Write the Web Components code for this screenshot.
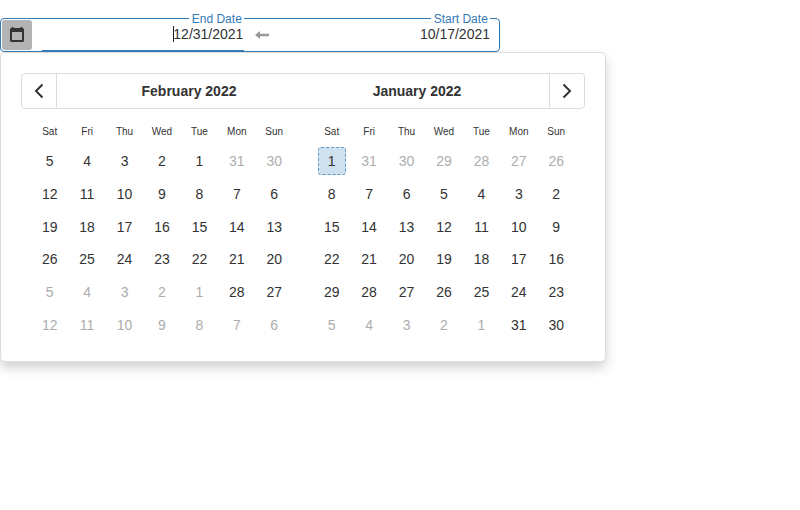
<!DOCTYPE html>
<html lang="en">
<head>
<meta charset="utf-8">
<title>Date range picker</title>
<style>
body { margin: 0; min-height: 510px; background: #fff; color: #333; font: 14px/20px "Liberation Sans", Arial, sans-serif; }
</style>
</head>
<body>
<range-picker></range-picker>
<script>
const define = (name, html, setup) => {
  const t = document.createElement('template');
  t.innerHTML = html;
  customElements.define(name, class extends HTMLElement {
    constructor() {
      super();
      this.attachShadow({ mode: 'open' }).append(t.content.cloneNode(true));
    }
    connectedCallback() { if (setup) setup(this, this.shadowRoot); }
  });
};

define('date-input', `
<style>
:host { display: block; box-sizing: border-box; height: 34px; position: relative; text-align: right; padding-top: 6px; }
:host([active]) { border-bottom: 2px solid #337ab7; padding-right: 0.6px; }
.label { position: absolute; top: -8px; right: 0; background: #fff; color: #337ab7; font-size: 12px; line-height: 18px; padding: 0 2.2px 0 2.4px; }
.value { display: inline-block; position: relative; }
.caret { display: none; position: absolute; left: 0; top: 2px; width: 1px; height: 16px; background: #222; }
:host([active]) .caret { display: block; }
</style>
<span class="label"><slot name="label"></slot></span><span class="value"><span class="caret"></span><slot></slot></span>`);

define('range-field', `
<style>
:host { display: flex; box-sizing: border-box; width: 500px; height: 34px; position: relative; }
.frame { position: absolute; inset: 0; border: 1px solid #337ab7; border-radius: 4px; }
button { all: unset; display: flex; align-items: center; justify-content: center; width: 30px; height: 30px; margin: 2px 10px 2px 2px; border-radius: 3px; background: #b3b3b3; position: relative; }
.arrow { width: 36px; display: flex; justify-content: center; padding-top: 11px; }
.arrow svg { width: 14px; height: 12px; }
.end { width: 202px; }
.start { width: 210px; }
</style>
<div class="frame"></div>
<button aria-label="Open calendar"><svg width="14" height="16" viewBox="0 0 14 16"><path fill="#333" fill-rule="evenodd" d="M1.5 1H1.7V0h1.8v1h7V0h1.8v1h.2A1.5 1.5 0 0 1 14 2.5v11a1.5 1.5 0 0 1-1.5 1.5h-11A1.5 1.5 0 0 1 0 13.500V2.5A1.5 1.5 0 0 1 1.500 1ZM2 5v8h10V5Z"/></svg></button>
<date-input class="end" active><span slot="label">End Date</span>12/31/2021</date-input>
<span class="arrow"><svg viewBox="0 0 14 12"><path fill="#999" d="M0 6 5 2v2.700h9v2.600H5V10Z"/></svg></span>
<date-input class="start"><span slot="label">Start Date</span>10/17/2021</date-input>`);

define('month-grid', `
<style>
:host { display: block; width: 262px; }
.row { display: grid; grid-template-columns: repeat(7, 1fr); justify-items: center; align-items: center; height: 32.8px; }
.head { height: 28px; margin-bottom: -1.4px; font-size: 10px; }
.row span { box-sizing: border-box; width: 28px; height: 28px; line-height: 28px; text-align: center; }
.row .out { color: #adadad; }
.row .today { line-height: 26px; border: 1px dashed #5b9bd0; border-radius: 3px; background: #cfe0ee; }
</style>
<div class="row head"><span>Sat</span><span>Fri</span><span>Thu</span><span>Wed</span><span>Tue</span><span>Mon</span><span>Sun</span></div>`,
(host, root) => {
  for (const line of host.getAttribute('days').split('|')) {
    const row = document.createElement('div');
    row.className = 'row';
    for (const token of line.trim().split(' ')) {
      const cell = document.createElement('span');
      cell.textContent = token.replace(/[-*]/g, '');
      if (token[0] === '-') cell.className = 'out';
      if (token[0] === '*') cell.className = 'today';
      row.append(cell);
    }
    root.append(row);
  }
});

define('calendar-header', `
<style>
:host { display: flex; box-sizing: border-box; height: 36px; border: 1px solid #ddd; border-radius: 4px; }
button { all: unset; box-sizing: border-box; width: 35px; display: flex; align-items: center; justify-content: center; }
.prev { border-right: 1px solid #ddd; }
.next { border-left: 1px solid #ddd; }
.titles { flex: 1; display: flex; padding: 0 18px; align-items: center; font-weight: bold; }
.titles div { flex: 1; text-align: center; }
path { fill: none; stroke: #333; stroke-width: 2; }
</style>
<button class="prev" aria-label="Next month"><svg width="10" height="16" viewBox="0 0 10 16"><path d="M8.5 1.5 2 8l6.5 6.5"/></svg></button>
<div class="titles"><div>February 2022</div><div>January 2022</div></div>
<button class="next" aria-label="Previous month"><svg width="10" height="16" viewBox="0 0 10 16"><path d="M1.5 1.5 8 8l-6.5 6.5"/></svg></button>`);

define('calendar-popup', `
<style>
:host { display: block; box-sizing: border-box; width: 606px; height: 310px; padding: 20px; border: 1px solid #ddd; border-radius: 5px; background: #fff; box-shadow: 0 6px 12px rgba(0,0,0,.18); }
.months { display: flex; gap: 20px; padding: 9px 10px 0; }
</style>
<calendar-header></calendar-header>
<div class="months">
<month-grid days="5 4 3 2 1 -31 -30|12 11 10 9 8 7 6|19 18 17 16 15 14 13|26 25 24 23 22 21 20|-5 -4 -3 -2 -1 28 27|-12 -11 -10 -9 -8 -7 -6"></month-grid>
<month-grid days="*1 -31 -30 -29 -28 -27 -26|8 7 6 5 4 3 2|15 14 13 12 11 10 9|22 21 20 19 18 17 16|29 28 27 26 25 24 23|-5 -4 -3 -2 -1 31 30"></month-grid>
</div>`);

define('range-picker', `
<style>:host { display: block; padding-top: 18px; }</style>
<range-field></range-field>
<calendar-popup></calendar-popup>`);
</script>
</body>
</html>
